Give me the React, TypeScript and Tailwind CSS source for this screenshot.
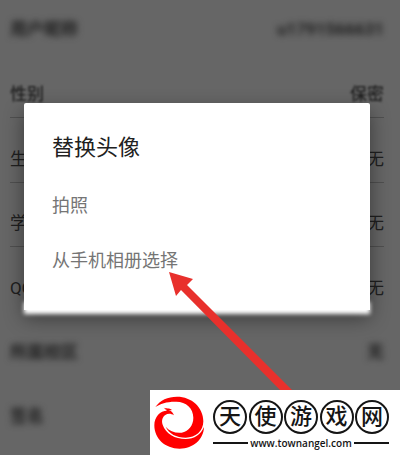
const rows = [
  { label: "用户昵称", value: "u1791566631", height: "h-[53px]", blur: "blur-[3px] font-bold", line: false },
  { label: "性别", value: "保密", height: "h-[65px]", blur: "blur-[1px] font-medium", line: true },
  { label: "生日", value: "无", height: "h-[65px]", blur: "", line: true },
  { label: "学校", value: "无", height: "h-16", blur: "", line: true },
  { label: "QQ号", value: "无", height: "h-[65px]", blur: "", line: false },
  { label: "所属校区", value: "无", height: "h-16", blur: "blur-[3px] font-bold", line: false },
  { label: "签名", value: "", height: "h-16", blur: "blur-[3px] font-bold", line: false },
]

const options = ["拍照", "从手机相册选择"]

function ProfileRow({ row }: { row: (typeof rows)[number] }) {
  return (
    <div
      className={`flex items-end justify-between border-b pb-[11px] text-[17px] leading-6 ${row.height} ${row.line ? "border-[#505050]" : "border-transparent"}`}
    >
      <dt className={row.blur}>{row.label}</dt>
      <dd className={row.blur}>{row.value}</dd>
    </div>
  )
}

function Dialog() {
  return (
    <section
      role="dialog"
      aria-labelledby="dialog-title"
      className="absolute left-6 right-[30px] top-[103px] rounded-t-xs bg-white px-7 pt-[29px] pb-2 shadow-[0_8px_20px_rgba(0,0,0,0.45)]"
    >
      <h1 id="dialog-title" className="text-[22px] leading-8 text-[#212121]">
        替换头像
      </h1>
      <ul className="pt-7">
        {options.map((option) => (
          <li key={option} className="h-[55px]">
            <button className="block text-lg leading-7 text-[#757575]">{option}</button>
          </li>
        ))}
      </ul>
      {/* soft lower edge */}
      <div className="absolute inset-x-0 -bottom-1 h-3 bg-white blur-[2px]"></div>
    </section>
  )
}

function Arrow() {
  return (
    <svg viewBox="0 0 124 120" className="absolute left-[168px] top-[271px] w-[124px]" aria-hidden="true">
      <path d="M1 1L25 8L19 14L124 119H112L13 19L8 25Z" fill="#e8302c" />
    </svg>
  )
}

function Phoenix() {
  return (
    <svg viewBox="6 6 156 160" className="w-[52px] shrink-0" aria-hidden="true">
      <path
        d="M13 39C28 18 50 8 78 8C122 8 157 40 157 82C157 112 134 131 104 131C76 131 54 119 44 98C56 112 73 118 92 116C112 112 127 95 127 71C127 43 105 23 76 23C50 22 28 29 13 39Z"
        fill="#f00"
      />
      <path
        d="M10 94C10 68 28 50 48 50L42 46C54 47 64 51 69 64C60 58 50 58 43 63C34 69 31 80 35 92C44 119 72 135 104 135C130 135 150 121 159 99C158 136 127 164 86 164C42 164 10 134 10 94Z"
        fill="#f00"
      />
      <path d="M38 41C46 44 54 41 63 48C55 50 47 48 43 45Z" fill="#f00" />
    </svg>
  )
}

function Brand() {
  return (
    <footer className="absolute bottom-0 right-0 flex h-[65px] w-[250px] items-center bg-white pl-[3px] pr-[11px] text-[#151515]">
      <Phoenix />
      <div className="ml-2 flex-1 pt-1">
        <div className="flex justify-between">
          {"天使游戏网".split("").map((char) => (
            <span
              key={char}
              className="flex size-[34px] items-center justify-center rounded-full border-2 border-[#151515] text-[22px] font-medium leading-none"
            >
              {char}
            </span>
          ))}
        </div>
        <div className="mt-[3px] flex items-center gap-[2px]">
          <span className="h-[2px] flex-1 bg-[#151515]"></span>
          <a href="#" className="font-['Open_Sans',sans-serif] text-[10px] font-semibold leading-3">
            www.townangel.com
          </a>
          <span className="h-[2px] flex-1 bg-[#151515]"></span>
        </div>
      </div>
    </footer>
  )
}

export default function App() {
  return (
    <main className="relative min-h-screen overflow-hidden bg-[#666666] font-['Roboto','Noto_Sans_CJK_SC',sans-serif] text-[#202020]">
      <dl className="pl-[10px] pr-4">
        {rows.map((row) => (
          <ProfileRow key={row.label} row={row} />
        ))}
      </dl>
      <Dialog />
      <Arrow />
      <Brand />
    </main>
  )
}
